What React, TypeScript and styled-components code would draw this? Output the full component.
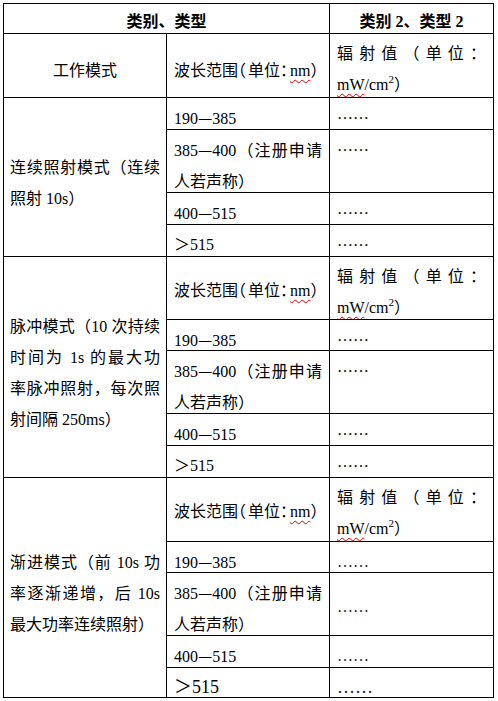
import React from 'react';
import styled, { createGlobalStyle } from 'styled-components';

const Global = createGlobalStyle`
  html, body { margin: 0; padding: 0; background: #fff; }
  body {
    font-family: "Liberation Serif", "Noto Sans CJK SC", serif;
    font-size: 16px;
    color: #000;
  }
`;

const Page = styled.div`
  padding: 3px 0 0 3px;
`;

const Table = styled.div<{ $rows: string }>`
  display: grid;
  grid-template-columns: 162px 162px 163px;
  grid-template-rows: ${(p) => p.$rows};
  gap: 1px;
  padding: 1px;
  background: #000;
  width: max-content;
`;

type VAlign = 'top' | 'middle';

const Cell = styled.div<{
  $rowSpan?: number;
  $colSpan?: number;
  $valign?: VAlign;
  $padTop?: number;
  $size?: number;
  $center?: boolean;
}>`
  grid-row: span ${(p) => p.$rowSpan ?? 1};
  grid-column: span ${(p) => p.$colSpan ?? 1};
  background: #fff;
  display: flex;
  flex-direction: column;
  justify-content: ${(p) => (p.$valign === 'middle' ? 'center' : 'flex-start')};
  padding: ${(p) => p.$padTop ?? 4}px 7px 0 7px;
  line-height: 31px;
  font-size: ${(p) => p.$size ?? 16}px;
  text-align: ${(p) => (p.$center ? 'center' : 'left')};
  overflow: hidden;
  min-width: 0;
`;

const ModeCell = styled(Cell)`
  padding-left: 6px;
  padding-right: 6px;
`;

const HeadCell = styled(Cell)`
  font-weight: bold;
  text-align: center;
  line-height: 22px;
  padding-top: 7px;
`;

const Line = styled.div<{ $last?: boolean }>`
  text-align: justify;
  text-align-last: ${(p) => (p.$last ? 'left' : 'justify')};
`;

const OneLine = styled.div`
  white-space: nowrap;
`;

const Misspelled = styled.span`
  text-decoration-line: underline;
  text-decoration-style: wavy;
  text-decoration-color: #e00000;
  text-decoration-thickness: 1px;
  text-decoration-skip-ink: none;
  text-underline-offset: 3px;
`;

const Half = styled.span`
  font-feature-settings: "halt" 1;
  letter-spacing: 2px;
`;

const Dash = styled.span`
  font-family: "Noto Sans CJK SC", sans-serif;
`;

const Sup = styled.sup`
  font-size: 11px;
  line-height: 0;
  vertical-align: 7px;
`;

const Dots = styled.span<{ $cjk?: boolean }>`
  font-family: ${(p) => (p.$cjk ? '"Noto Sans CJK SC", sans-serif' : '"Liberation Serif", serif')};
  vertical-align: ${(p) => (p.$cjk ? '12px' : 'baseline')};
  color: #222;
`;

type Group = {
  label?: string;
  mode: string[];
  latinDots: boolean;
  headPad: number;
};

const groups: Group[] = [
  { label: '工作模式', mode: ['连续照射模式（连续', '照射 10s）'], latinDots: false, headPad: 9 },
  {
    mode: ['脉冲模式（10 次持续', '时间为 1s 的最大功', '率脉冲照射，每次照', '射间隔 250ms）'],
    latinDots: false,
    headPad: 4,
  },
  {
    mode: ['渐进模式（前 10s 功', '率逐渐递增，后 10s', '最大功率连续照射）'],
    latinDots: true,
    headPad: 4,
  },
];

const ranges: string[][] = [
  ['190—385'],
  ['385—400（注册申请', '人若声称）'],
  ['400—515'],
  ['＞515'],
];

const rowHeights = '29px 63px 31px 62px 31px 31px 62px 30px 62px 31px 31px 63px 30px 62px 31px 29px';

function withDash(text: string) {
  const parts = text.split('—');
  return parts.map((p, i) => (
    <React.Fragment key={i}>
      {i > 0 && <Dash>—</Dash>}
      {p}
    </React.Fragment>
  ));
}

function Lines({ lines }: { lines: string[] }) {
  return (
    <>
      {lines.map((l, i) => (
        <Line key={i} $last={i === lines.length - 1}>
          {withDash(l)}
        </Line>
      ))}
    </>
  );
}

function GroupRows({ group, last }: { group: Group; last: boolean }) {
  const mode = (
    <ModeCell $rowSpan={group.label ? 4 : 5} $valign="middle" $padTop={12}>
      <Lines lines={group.mode} />
    </ModeCell>
  );
  return (
    <>
      {group.label ? (
        <Cell $valign="middle" $center $padTop={group.headPad}>
          {group.label}
        </Cell>
      ) : (
        mode
      )}
      <Cell $valign="middle" $padTop={group.headPad}>
        <OneLine>
          波长范围<Half>（</Half>单位<Half>：</Half>
          <Misspelled>nm</Misspelled>）
        </OneLine>
      </Cell>
      <Cell>
        <Line>辐射值（单位：</Line>
        <Line $last>
          <Misspelled>mW</Misspelled>/cm<Sup>2</Sup>）
        </Line>
      </Cell>
      {group.label ? mode : null}
      {ranges.map((r, i) => {
        const big = last && i === ranges.length - 1;
        const middle = group.latinDots && r.length > 1;
        return (
          <React.Fragment key={i}>
            <Cell $size={big ? 18 : 16}>
              <Lines lines={r} />
            </Cell>
            <Cell $valign={middle ? 'middle' : 'top'} $size={big ? 18 : 16}>
              <Dots $cjk={!group.latinDots}>……</Dots>
            </Cell>
          </React.Fragment>
        );
      })}
    </>
  );
}

export default function App() {
  return (
    <Page>
      <Global />
      <Table $rows={rowHeights}>
        <HeadCell $colSpan={2}>类别、类型</HeadCell>
        <HeadCell>类别 2、类型 2</HeadCell>
        {groups.map((g, i) => (
          <GroupRows key={i} group={g} last={i === groups.length - 1} />
        ))}
      </Table>
    </Page>
  );
}
